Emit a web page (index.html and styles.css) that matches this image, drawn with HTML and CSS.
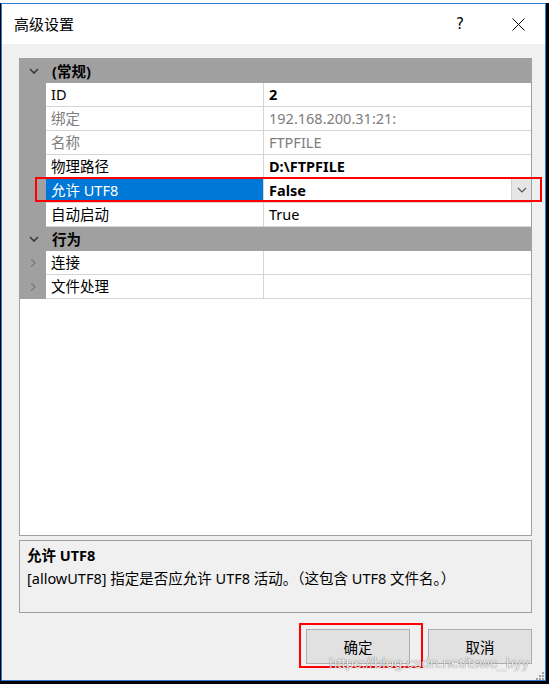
FILE: index.html
```html
<!DOCTYPE html>
<html lang="zh-CN">
<head>
<meta charset="utf-8">
<title>高级设置</title>
<link rel="stylesheet" href="styles.css">
</head>
<body>
<div class="shot">
  <div class="window">
    <div class="titlebar">
      <span class="title">高级设置</span>
      <span class="help">?</span>
      <svg class="close" width="13" height="13" viewBox="0 0 13 13"><path d="M0.5 0.5L12.5 12.5M12.5 0.5L0.5 12.5" stroke="#000" stroke-width="1" fill="none"/></svg>
    </div>
    <div class="content">
      <div class="grid">
        <div class="row cat">
          <div class="gut"><svg width="12" height="8" viewBox="0 0 12 8"><path d="M2 2L6 6L10 2" stroke="#3c3c3c" stroke-width="1.6" fill="none"/></svg></div>
          <div class="catname">(常规)</div>
        </div>
        <div class="row">
          <div class="gut"></div>
          <div class="name">ID</div>
          <div class="val bold">2</div>
        </div>
        <div class="row dim">
          <div class="gut"></div>
          <div class="name">绑定</div>
          <div class="val">192.168.200.31:21:</div>
        </div>
        <div class="row dim">
          <div class="gut"></div>
          <div class="name">名称</div>
          <div class="val">FTPFILE</div>
        </div>
        <div class="row">
          <div class="gut"></div>
          <div class="name">物理路径</div>
          <div class="val bold">D:\FTPFILE</div>
        </div>
        <div class="row sel">
          <div class="gut"></div>
          <div class="name">允许 UTF8</div>
          <div class="val bold">False<span class="drop"><svg width="12" height="8" viewBox="0 0 12 8"><path d="M2 2L6 6L10 2" stroke="#555" stroke-width="1.2" fill="none"/></svg></span></div>
        </div>
        <div class="row">
          <div class="gut"></div>
          <div class="name">自动启动</div>
          <div class="val">True</div>
        </div>
        <div class="row cat">
          <div class="gut"><svg width="12" height="8" viewBox="0 0 12 8"><path d="M2 2L6 6L10 2" stroke="#3c3c3c" stroke-width="1.6" fill="none"/></svg></div>
          <div class="catname">行为</div>
        </div>
        <div class="row">
          <div class="gut"><svg width="8" height="12" viewBox="0 0 8 12"><path d="M2 2L6 6L2 10" stroke="#7a7a7a" stroke-width="1.3" fill="none"/></svg></div>
          <div class="name">连接</div>
          <div class="val"></div>
        </div>
        <div class="row">
          <div class="gut"><svg width="8" height="12" viewBox="0 0 8 12"><path d="M2 2L6 6L2 10" stroke="#7a7a7a" stroke-width="1.3" fill="none"/></svg></div>
          <div class="name">文件处理</div>
          <div class="val"></div>
        </div>
        <div class="empty"></div>
      </div>
      <div class="desc">
        <div class="desc-title">允许 UTF8</div>
        <div class="desc-text">[allowUTF8] 指定是否应允许 UTF8 活动。（这包含 UTF8 文件名。）</div>
      </div>
      <div class="buttons">
        <button class="btn">确定</button>
        <button class="btn">取消</button>
      </div>
    </div>
  </div>
  <div class="mark mark-row"></div>
  <div class="mark mark-ok"></div>
  <div class="watermark">https://blog.csdn.net/tswc_byy</div>
  <svg class="grip" width="10" height="10" viewBox="0 0 10 10">
    <rect x="7" y="1" width="2" height="2" fill="#a0a0a0"/>
    <rect x="4" y="4" width="2" height="2" fill="#a0a0a0"/>
    <rect x="7" y="4" width="2" height="2" fill="#a0a0a0"/>
    <rect x="1" y="7" width="2" height="2" fill="#a0a0a0"/>
    <rect x="4" y="7" width="2" height="2" fill="#a0a0a0"/>
    <rect x="7" y="7" width="2" height="2" fill="#a0a0a0"/>
  </svg>
</div>
</body>
</html>
```

FILE: styles.css
```css
html, body {
  margin: 0;
  padding: 0;
  background: #fff;
}
body {
  width: 549px;
  height: 684px;
  overflow: hidden;
  font-family: "Noto Sans", "Noto Sans CJK SC", sans-serif;
  font-size: 14.5px;
  color: #000;
}
.shot {
  position: relative;
  margin-top: 3px;
  width: 549px;
  height: 681px;
  box-sizing: border-box;
  background: #000;
  padding: 0 3px 3px 1px;
}
.window {
  height: 100%;
  box-sizing: border-box;
  border: 1px solid #2f7bd0;
  background: #f0f0f0;
  display: flex;
  flex-direction: column;
}
.titlebar {
  height: 40px;
  background: #fff;
  display: flex;
  align-items: center;
  padding-left: 12px;
  padding-right: 20px;
  flex-shrink: 0;
}
.title {
  font-size: 15px;
  flex: 1;
  line-height: 20px;
}
.help {
  font-family: "DejaVu Sans", sans-serif;
  font-size: 15px;
  margin-right: 48px;
  line-height: 20px;
}
.close {
  display: block;
}
.content {
  padding: 14px 13px 0 17px;
  display: flex;
  flex-direction: column;
}
.grid {
  height: 478px;
  box-sizing: border-box;
  border: 1px solid #a0a0a0;
  background: #fff;
  display: flex;
  flex-direction: column;
}
.row {
  height: 24px;
  display: flex;
  flex-shrink: 0;
  line-height: 23px;
}
.gut {
  width: 26px;
  background: #a0a0a0;
  display: flex;
  align-items: center;
  justify-content: center;
  flex-shrink: 0;
}
.gut svg { display: block; }
.cat { background: #a0a0a0; }
.cat .gut svg { margin-left: 1px; }
.catname {
  padding-left: 6px;
  font-weight: bold;
  line-height: 24px;
}
.name {
  width: 218px;
  flex-shrink: 0;
  box-sizing: border-box;
  padding-left: 5px;
  border-right: 1px solid #d6d6d6;
  border-bottom: 1px solid #d6d6d6;
  white-space: nowrap;
}
.val {
  flex: 1;
  position: relative;
  padding-left: 5px;
  border-bottom: 1px solid #d6d6d6;
  white-space: nowrap;
}
.bold { font-weight: bold; }
.dim .name, .dim .val { color: #7d7d7d; }
.sel .name {
  background: #0078d7;
  color: #fff;
}
.drop {
  position: absolute;
  right: 0;
  top: 0;
  width: 19px;
  height: 22px;
  background: #e6e6e6;
  border-left: 1px solid #d0d0d0;
  display: flex;
  align-items: center;
  justify-content: center;
}
.empty { flex: 1; }
.desc {
  margin-top: 4px;
  height: 73px;
  box-sizing: border-box;
  border: 1px solid #a0a0a0;
  padding: 3px 7px;
  background: #f0f0f0;
}
.desc-title {
  font-weight: bold;
  line-height: 22px;
}
.desc-text {
  line-height: 24px;
  white-space: nowrap;
}
.buttons {
  margin-top: 16px;
  display: flex;
  justify-content: flex-end;
  gap: 18px;
}
.btn {
  width: 104px;
  height: 35px;
  background: #e1e1e1;
  border: 1px solid #adadad;
  font-family: "Noto Sans", "Noto Sans CJK SC", sans-serif;
  font-size: 14.5px;
  color: #000;
  padding: 0;
}
.mark {
  position: absolute;
  border: 2px solid #f00;
  box-sizing: border-box;
}
.mark-row {
  left: 35px;
  top: 174px;
  width: 507px;
  height: 25px;
}
.mark-ok {
  left: 299px;
  top: 620px;
  width: 124px;
  height: 45px;
}
.watermark {
  position: absolute;
  left: 329px;
  top: 651px;
  font-family: "Liberation Sans", sans-serif;
  font-size: 15px;
  color: rgba(255, 255, 255, 0.9);
  text-shadow: 0 0 1px rgba(0, 0, 0, 0.7);
}
.grip {
  position: absolute;
  left: 535px;
  top: 668px;
}
```
